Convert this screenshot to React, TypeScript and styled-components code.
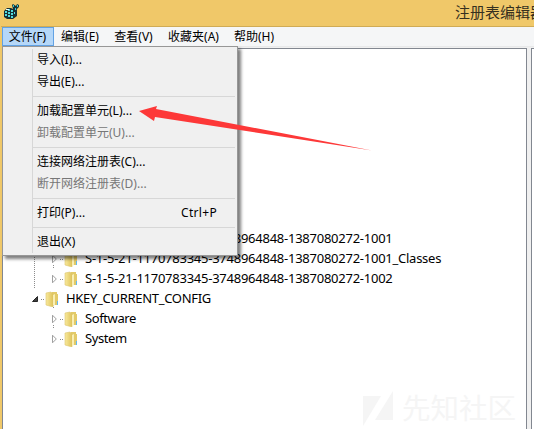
import React from 'react';
import styled, { createGlobalStyle } from 'styled-components';

const GlobalStyle = createGlobalStyle`
  * { box-sizing: border-box; }
  body {
    margin: 0;
    overflow: hidden;
    font-family: "Noto Sans", "Noto Sans CJK SC", sans-serif;
    font-size: 12px;
    color: #000;
  }
`;

const Window = styled.div`
  position: relative;
  width: 534px;
  height: 429px;
  overflow: hidden;
  display: flex;
  flex-direction: column;
  padding-left: 2px;
  background: #f0c869;
`;

const TitleBar = styled.header`
  flex: 0 0 27px;
  display: flex;
  justify-content: space-between;
  border-bottom: 1px solid #d0ab55;
  padding: 3px 0 0 3px;
  margin-left: -1px;
`;

const Title = styled.span`
  width: 79px;
  margin-top: -1px;
  font-family: "Noto Sans CJK SC", sans-serif;
  font-size: 15px;
  line-height: 19px;
  white-space: nowrap;
  color: #35301f;
`;

const MenuBar = styled.nav`
  flex: 0 0 19px;
  display: flex;
  background: #f5f6f7;
  border-bottom: 1px solid #e8e9ea;
`;

const MenuTitle = styled.div<{ $width: number; $open?: boolean }>`
  width: ${p => p.$width}px;
  height: 19px;
  display: flex;
  justify-content: center;
  padding-right: 1px;
  line-height: 18px;
  white-space: nowrap;
  border: 1px solid ${p => (p.$open ? '#62a2e4' : 'transparent')};
  background: ${p => (p.$open ? '#b5d7f8' : 'transparent')};
`;

const Panes = styled.main`
  flex: 1;
  display: flex;
  gap: 4px;
  padding-top: 1px;
  background: #f0f0f0;
`;

const TreePane = styled.section`
  width: 525px;
  border: 1px solid #828790;
  border-bottom: 0;
  background: #fff;
  padding-top: 180px;
`;

const ValuePane = styled.section`
  flex: 1;
  border: 1px solid #828790;
  border-right: 0;
  border-bottom: 0;
  background: #fff;
`;

const TreeRow = styled.div<{ $depth: number; $last?: boolean }>`
  height: 20px;
  display: flex;
  align-items: center;
  padding-left: ${p => 29 + p.$depth * 19}px;
  background-image: ${p => (p.$last ? 'none' : 'repeating-linear-gradient(#8c8c8c 0 1px, transparent 1px 2px)')};
  background-size: 1px 4px;
  background-position: 50px 16px;
  background-repeat: no-repeat;
`;

const Branch = styled.div`
  background: repeating-linear-gradient(#8c8c8c 0 1px, transparent 1px 2px) 31px 0 / 1px 62px no-repeat;
`;

const Label = styled.span<{ $spacing?: number }>`
  margin-left: 5px;
  line-height: 20px;
  font-size: 13px;
  letter-spacing: ${p => p.$spacing ?? 0}px;
  white-space: nowrap;
  transform: translateY(-1px);
`;

const Dropdown = styled.div`
  position: absolute;
  left: 2px;
  top: 46px;
  width: 236px;
  height: 210px;
  padding: 2px 2px 2px 0;
  border: 1px solid #979797;
  background: #f0f0f0 linear-gradient(#d7d7d7, #d7d7d7) 29px 2px / 1px 204px no-repeat;
  box-shadow: 3px 3px 3px rgba(0, 0, 0, 0.5);
`;

const Item = styled.div<{ $disabled?: boolean }>`
  height: 22px;
  padding: 0 18px 0 34px;
  display: flex;
  justify-content: space-between;
  line-height: 22px;
  color: ${p => (p.$disabled ? '#777' : '#000')};
`;

const Shortcut = styled.span`
  letter-spacing: 0.3px;
`;

const Separator = styled.div`
  height: 1px;
  margin: 3px 0 3px 30px;
  background: #d7d7d7;
`;

const Arrow = styled.svg`
  position: absolute;
  left: 138px;
  top: 103px;
`;

const Watermark = styled.div`
  position: absolute;
  left: 363px;
  top: 390px;
  display: flex;
  gap: 9px;
  font-family: "Noto Sans CJK SC", sans-serif;
  font-size: 28.5px;
  line-height: 34px;
  color: #f5f5f5;
  white-space: nowrap;
`;

const RegeditIcon = () => (
  <svg width="18" height="18" viewBox="0 0 18 18">
    <path d="M0 8 3 5h4l2 1 2-1 2 2v6l-4 3H3l-3-2z" fill="#172f35" />
    <path d="M1 8h2v2H1zm3-2h2v2H4zm0 3h2v2H4zm-3 2h2v2H1zm3 1h2v2H4zm3-5h2v2H7zm0 3h2v2H7zm0 3h2v2H7zm3-4h1v2h-1z" fill="#51dce0" />
    <path d="M8 2 9 1l3 2 1-2 2 1v2l-2 2-1 2-3-2z" fill="#153238" />
    <path d="M9 2h1v2H9zm4 0h1v2h-1zm-2 3h1v2h-1z" fill="#3bcbd0" />
    <path d="M2 6h3v1H2z" fill="#e8ffff" />
  </svg>
);

const Expander = ({ open }: { open?: boolean }) => (
  <svg width="13" height="12" viewBox="0 0 13 12">
    {open ? <path d="M5.5 3.5v5h-5z" fill="#404040" stroke="#262626" /> : <path d="M1.5 2.2v7.6L5.3 6z" fill="#fff" stroke="#a0a0a0" />}
    <path d="M9 6h1v1H9zm2 0h1v1h-1z" fill="#888" />
  </svg>
);

const Folder = () => (
  <svg width="16" height="16" viewBox="0 0 16 16">
    <defs>
      <linearGradient id="folderFace">
        <stop stopColor="#f8e99c" />
        <stop offset="1" stopColor="#dfc35a" />
      </linearGradient>
    </defs>
    <path d="M7 1h5v2h1v11H7z" fill="#e3ca68" />
    <path d="M1 2 6 1l2 2v13l-7-2z" fill="url(#folderFace)" stroke="#dcc46d" strokeWidth=".6" />
    <path d="M8 4v11l2-1V3z" fill="#f9efb4" />
    <path d="M12 10h1v4h-1z" fill="#63b9ef" />
  </svg>
);

const menus = [
  { label: '文件(F)', width: 52, open: true },
  { label: '编辑(E)', width: 53 },
  { label: '查看(V)', width: 54 },
  { label: '收藏夹(A)', width: 66 },
  { label: '帮助(H)', width: 55 },
];

const items = [
  [{ label: '导入(I)...' }, { label: '导出(E)...' }],
  [{ label: '加载配置单元(L)...' }, { label: '卸载配置单元(U)...', disabled: true }],
  [{ label: '连接网络注册表(C)...' }, { label: '断开网络注册表(D)...', disabled: true }],
  [{ label: '打印(P)...', shortcut: 'Ctrl+P' }],
  [{ label: '退出(X)' }],
] as { label: string; disabled?: boolean; shortcut?: string }[][];

const sid = 'S-1-5-21-1170783345-3748964848-1387080272-';

interface NodeProps {
  label: string;
  depth?: number;
  spacing?: number;
  last?: boolean;
}

const Node = ({ label, depth = 1, spacing, last }: NodeProps) => (
  <TreeRow $depth={depth} $last={last}>
    <Expander open={depth === 0} />
    <Folder />
    <Label $spacing={spacing}>{label}</Label>
  </TreeRow>
);

export default function App() {
  return (
    <Window>
      <GlobalStyle />
      <TitleBar>
        <RegeditIcon />
        <Title>注册表编辑器</Title>
      </TitleBar>
      <MenuBar>
        {menus.map(m => (
          <MenuTitle key={m.label} $width={m.width} $open={m.open}>{m.label}</MenuTitle>
        ))}
      </MenuBar>
      <Panes>
        <TreePane>
          <Branch>
            <Node label={sid + '1001'} spacing={-0.25} />
            <Node label={sid + '1001_Classes'} spacing={-0.25} />
            <Node label={sid + '1002'} spacing={-0.25} last />
          </Branch>
          <Node label="HKEY_CURRENT_CONFIG" depth={0} spacing={-0.3} />
          <Node label="Software" spacing={-0.4} />
          <Node label="System" spacing={-0.4} last />
        </TreePane>
        <ValuePane />
      </Panes>
      <Watermark>
        <svg width="30" height="36" viewBox="0 0 30 36">
          <path d="M0 6h18L0 36zM30 1v29H12z" fill="#f5f5f5" />
        </svg>
        <span>先知社区</span>
      </Watermark>
      <Dropdown>
        {items.map((group, i) => (
          <React.Fragment key={group[0].label}>
            {i > 0 && <Separator />}
            {group.map(item => (
              <Item key={item.label} $disabled={item.disabled}>
                <span>{item.label}</span>
                {item.shortcut && <Shortcut>{item.shortcut}</Shortcut>}
              </Item>
            ))}
          </React.Fragment>
        ))}
      </Dropdown>
      <Arrow width="236" height="50" viewBox="0 0 236 50">
        <path d="M1 8 19 3 18 6l216 41.5L17 14l-1 4z" fill="#fd3838" />
      </Arrow>
    </Window>
  );
}
